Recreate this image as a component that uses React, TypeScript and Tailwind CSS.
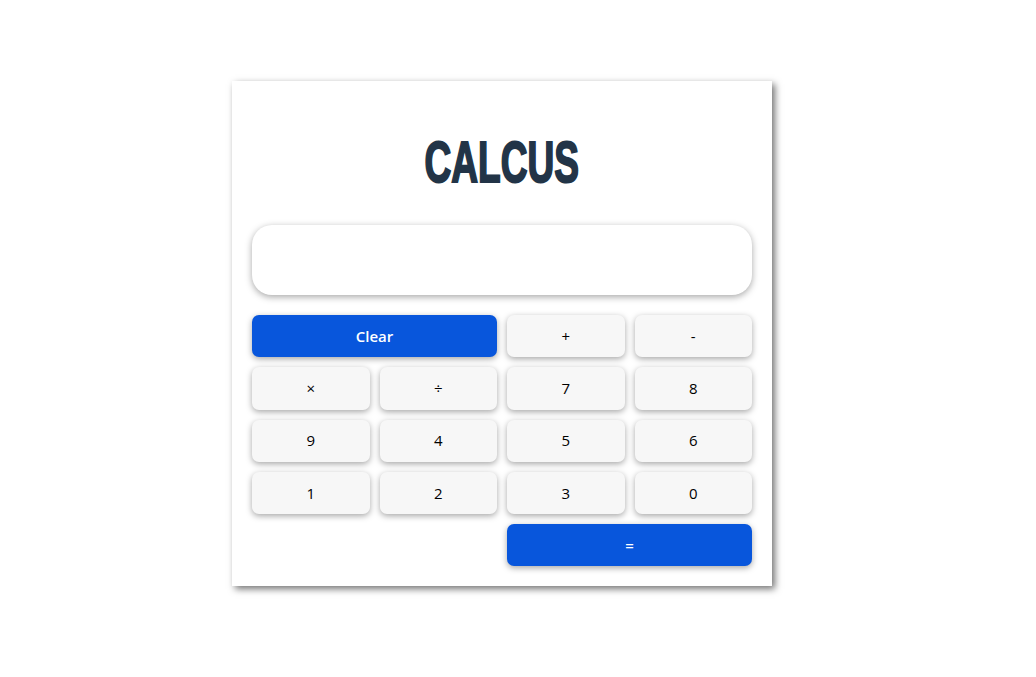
const keys: { label: string; wide?: boolean; blue?: boolean; start?: boolean }[] = [
  { label: 'Clear', wide: true, blue: true },
  { label: '+' },
  { label: '-' },
  { label: '×' },
  { label: '÷' },
  { label: '7' },
  { label: '8' },
  { label: '9' },
  { label: '4' },
  { label: '5' },
  { label: '6' },
  { label: '1' },
  { label: '2' },
  { label: '3' },
  { label: '0' },
  { label: '=', wide: true, blue: true, start: true },
];

export default function App() {
  return (
    <div className="min-h-screen bg-white pl-[232px] pt-[81px] font-['Open_Sans','Noto_Sans',sans-serif]">
      <div className="w-[540px] bg-white p-5 shadow-[3px_3px_7px_rgba(0,0,0,0.55)]">
        <h1 className="h-[124px] pt-[31px] text-center text-[57px] leading-[60px] font-bold text-[#223447] font-['Liberation_Sans_Narrow','Liberation_Sans',sans-serif]">
          <span className="inline-block scale-x-[0.65] [-webkit-text-stroke:2px_#223447]">CALCUS</span>
        </h1>
        <div className="h-[70px] rounded-[20px] bg-white shadow-[0_2px_7px_rgba(0,0,0,0.35)]" />
        <div className="mt-5 grid grid-cols-4 gap-[10px]">
          {keys.map((k) => (
            <button
              key={k.label}
              className={
                'h-[42.3px] rounded-[7px] text-[15px] shadow-[0_2px_6px_rgba(0,0,0,0.35)] ' +
                (k.wide ? 'col-span-2 ' : '') +
                (k.start ? 'col-start-3 ' : '') +
                (k.blue ? 'bg-[#0856dc] text-white font-semibold' : 'bg-[#f7f7f7] text-black')
              }
            >
              {k.label}
            </button>
          ))}
        </div>
      </div>
    </div>
  );
}
